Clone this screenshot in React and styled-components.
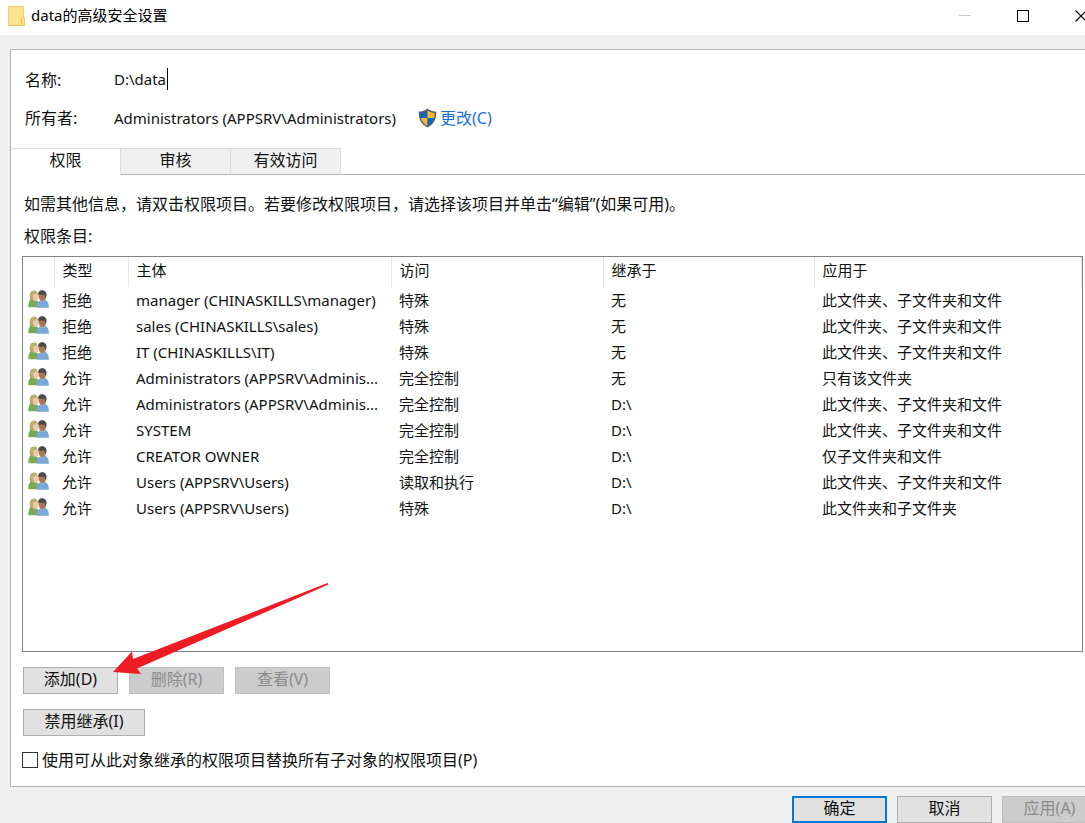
import React, { useState } from "react";
import styled, { createGlobalStyle, css } from "styled-components";

const entries = [
  ["拒绝", "manager (CHINASKILLS\\manager)", "特殊", "无", "此文件夹、子文件夹和文件"],
  ["拒绝", "sales (CHINASKILLS\\sales)", "特殊", "无", "此文件夹、子文件夹和文件"],
  ["拒绝", "IT (CHINASKILLS\\IT)", "特殊", "无", "此文件夹、子文件夹和文件"],
  ["允许", "Administrators (APPSRV\\Adminis...", "完全控制", "无", "只有该文件夹"],
  ["允许", "Administrators (APPSRV\\Adminis...", "完全控制", "D:\\", "此文件夹、子文件夹和文件"],
  ["允许", "SYSTEM", "完全控制", "D:\\", "此文件夹、子文件夹和文件"],
  ["允许", "CREATOR OWNER", "完全控制", "D:\\", "仅子文件夹和文件"],
  ["允许", "Users (APPSRV\\Users)", "读取和执行", "D:\\", "此文件夹、子文件夹和文件"],
  ["允许", "Users (APPSRV\\Users)", "特殊", "D:\\", "此文件夹和子文件夹"],
];

const tabs = ["权限", "审核", "有效访问"];

function FolderIcon() {
  return (
    <svg width="18" height="22" viewBox="0 0 18 22" aria-hidden="true">
      <path d="M.5 1.500h15v11h1v8H.5z" fill="#ffe391" stroke="#f0cf6b" />
      <path d="M13.500 20v-6.500l2-1" fill="none" stroke="#e8c253" />
      <path d="M.5 20.500h16" stroke="#e8c253" />
    </svg>
  );
}

function ShieldIcon() {
  return (
    <svg width="19" height="20" viewBox="0 0 19 20" aria-hidden="true">
      <path
        d="M9.500.5C7 2.800 4 3.500.8 3.600c-.2 7.400 1.800 12.400 8.700 16 6.900-3.600 8.900-8.600 8.700-16C15 3.500 12 2.800 9.500.5z"
        fill="#555f68"
      />
      <path d="M9.500 2.500C7.300 4.200 5 4.900 2.400 5c0 2 .1 3.400.5 5h6.600z" fill="#0f68c4" />
      <path d="M9.500 2.500c2.200 1.700 4.500 2.400 7.100 2.500 0 2-.1 3.400-.5 5H9.500z" fill="#fdb82b" />
      <path d="M9.500 10H2.900c1 3.400 2.900 6 6.600 8z" fill="#fdb82b" />
      <path d="M9.500 10h6.600c-1 3.400-2.900 6-6.600 8z" fill="#0f68c4" />
    </svg>
  );
}

function UsersIcon() {
  return (
    <svg width="21" height="18" viewBox="0 0 21 18" aria-hidden="true">
      <path d="M1.800 9c-.5-5 .5-8.500 4-8.500 3 0 4.200 2 4.200 5L8 11H3z" fill="#b9ad72" />
      <path d="M5 4.500c1.700 0 3.200-.7 4.500-1.500l1 3.500c0 2.500-1 4.500-2.800 4.500S4.800 8 5 4.500z" fill="#ecc9a6" />
      <path d="M.3 17.200c0-4 .6-7 3.200-8 1.500 2 3.500 2.300 5 1.300 2 1 2.500 3 2.500 6.700z" fill="#79ab55" />
      <path d="M10.500 5c0-3 1.500-4.500 3.500-4.500s4.200 1.500 4.200 5c0 3-1.500 6-3.700 6s-4-3-4-6.500z" fill="#a97855" />
      <path d="M10 4.500C10 1.800 12 .3 14.200.3s4.600 1.700 4.300 5c-.1 1.200-.5 2-1 2.700L16.500 4.500c-2 .3-4.500.2-6.500 0z" fill="#4b4a4b" />
      <path d="M9 17.800c0-2-.1-3-.5-4 1-1.500 2.300-2.800 4-3.300 1.500 1.300 3 1.200 4.700-.5 2.800 1 3.700 3.500 3.700 7.800z" fill="#7ba7d9" />
    </svg>
  );
}

export default function App() {
  const [active, setActive] = useState(0);
  const [replace, setReplace] = useState(false);

  return (
    <Window>
      <GlobalStyle />
      <TitleBar>
        <FolderIcon />
        <Title>data的高级安全设置</Title>
        <WindowButton aria-label="最小化" disabled>
          <svg width="12" height="12" viewBox="0 0 12 12">
            <path d="M0 5.500h12" stroke="#c8c8c8" />
          </svg>
        </WindowButton>
        <WindowButton aria-label="最大化">
          <svg width="12" height="12" viewBox="0 0 12 12">
            <rect x=".5" y=".5" width="11" height="11" fill="none" stroke="#000" />
          </svg>
        </WindowButton>
        <WindowButton aria-label="关闭">
          <svg width="12" height="12" viewBox="0 0 12 12">
            <path d="M.5.5l11 11M11.500.5l-11 11" stroke="#000" strokeWidth="1.200" />
          </svg>
        </WindowButton>
      </TitleBar>

      <Panel>
        <Properties>
          <label htmlFor="object-name">名称:</label>
          <NameInput id="object-name" value="D:\data" readOnly />
          <span>所有者:</span>
          <Owner>
            <span>Administrators (APPSRV\Administrators)</span>
            <ChangeLink href="#change">
              <ShieldIcon />
              更改(C)
            </ChangeLink>
          </Owner>
        </Properties>

        <TabList role="tablist">
          {tabs.map((tab, i) => (
            <Tab
              key={tab}
              role="tab"
              aria-selected={i === active}
              $active={i === active}
              onClick={() => setActive(i)}
            >
              {tab}
            </Tab>
          ))}
          <TabRest />
        </TabList>

        <Content>
          <Hint>如需其他信息，请双击权限项目。若要修改权限项目，请选择该项目并单击“编辑”(如果可用)。</Hint>
          <Hint id="entries-label">权限条目:</Hint>
          <ListBox>
            <Table aria-labelledby="entries-label">
              <colgroup>
                <Col $width={31} />
                <Col $width={74} />
                <Col $width={263} />
                <Col $width={212} />
                <Col $width={211} />
                <col />
              </colgroup>
              <thead>
                <tr>
                  <Th />
                  <Th>类型</Th>
                  <Th>主体</Th>
                  <Th>访问</Th>
                  <Th>继承于</Th>
                  <Th>应用于</Th>
                </tr>
              </thead>
              <tbody>
                {entries.map((entry, i) => (
                  <tr key={i}>
                    <IconCell>
                      <UsersIcon />
                    </IconCell>
                    {entry.map((value, j) => (
                      <Td key={j}>{value}</Td>
                    ))}
                  </tr>
                ))}
              </tbody>
            </Table>
          </ListBox>

          <ButtonRow>
            <Button>添加(D)</Button>
            <Button disabled>删除(R)</Button>
            <Button disabled>查看(V)</Button>
          </ButtonRow>
          <ButtonRow>
            <Button $wide>禁用继承(I)</Button>
          </ButtonRow>
          <CheckRow>
            <Checkbox
              type="checkbox"
              checked={replace}
              onChange={(e) => setReplace(e.target.checked)}
            />
            使用可从此对象继承的权限项目替换所有子对象的权限项目(P)
          </CheckRow>
          <Arrow viewBox="0 0 216 92" aria-hidden="true">
            <path d="M0 89L19 68.500 20 76 214.500 0 215.500 1.500 24 85.500 28 91z" fill="#ee1c25" />
          </Arrow>
        </Content>
      </Panel>

      <Footer>
        <Button $primary>确定</Button>
        <Button>取消</Button>
        <Button disabled>应用(A)</Button>
      </Footer>
    </Window>
  );
}

const GlobalStyle = createGlobalStyle`
  * {
    box-sizing: border-box;
  }
  body {
    margin: 0;
    background-color: #f0f0f0;
    color: #111;
    font-family: "Noto Sans", "Noto Sans CJK SC", sans-serif;
    font-size: 16px;
    line-height: 24px;
  }
  button, input {
    font: inherit;
    color: inherit;
  }
  svg {
    display: block;
    flex: none;
  }
`;

const Window = styled.main`
  display: flex;
  flex-direction: column;
  min-height: 100vh;
  overflow: hidden;
`;

const TitleBar = styled.header`
  display: flex;
  align-items: center;
  height: 35px;
  padding: 0 0 4px 8px;
  margin-right: -25px;
  background-color: white;
`;

const Title = styled.h1`
  flex: 1;
  margin: 0 0 0 5px;
  padding-bottom: 2px;
  color: black;
  font-size: 15px;
  font-weight: normal;
`;

const WindowButton = styled.button`
  display: grid;
  place-items: center;
  width: 58px;
  height: 31px;
  padding: 0;
  border: none;
  background-color: transparent;
`;

const Panel = styled.section`
  flex: 1;
  margin: 14px 0 0 10px;
  border: 1px solid #b4b4b4;
  border-right: none;
  background-color: white;
`;

const Properties = styled.div`
  display: grid;
  grid-template-columns: 89px 1fr;
  grid-auto-rows: 24px;
  row-gap: 14px;
  padding: 18px 14px;
`;

const NameInput = styled.input`
  field-sizing: content;
  justify-self: start;
  height: 22px;
  padding: 0 1px 0 0;
  border: none;
  border-right: 1px solid black;
  outline: none;
  font-size: 15px;
  caret-color: transparent;
`;

const Owner = styled.div`
  display: flex;
  align-items: center;
  gap: 22px;
  font-size: 15px;
`;

const ChangeLink = styled.a`
  display: flex;
  align-items: center;
  gap: 3px;
  color: #1a73d9;
  font-size: 16px;
  text-decoration: none;
`;

const TabList = styled.div`
  display: flex;
  height: 27px;
`;

const Tab = styled.button`
  width: 110px;
  padding: 0 0 3px;
  border: 1px solid #dcdcdc;
  border-left: none;
  border-bottom-color: #b4b4b4;
  background-color: #f0f0f0;
  line-height: 22px;
  ${(props) =>
    props.$active &&
    css`
      border-bottom-color: white;
      background-color: white;
    `}
`;

const TabRest = styled.div`
  flex: 1;
  border-bottom: 1px solid #b4b4b4;
`;

const Content = styled.div`
  position: relative;
  padding: 17px 2px 0 11px;
`;

const Hint = styled.p`
  margin: 0 0 8px 2px;
`;

const ListBox = styled.div`
  height: 396px;
  border: 1px solid #828282;
`;

const Table = styled.table`
  width: 100%;
  table-layout: fixed;
  border-collapse: collapse;
  font-size: 15px;
`;

const Col = styled.col`
  width: ${(props) => props.$width}px;
`;

const Th = styled.th`
  height: 30px;
  padding: 0 8px 4px;
  border-right: 1px solid #e5e5e5;
  font-weight: normal;
  text-align: left;
`;

const Td = styled.td`
  height: 26px;
  padding: 0 0 1px 8px;
  line-height: 20px;
  white-space: nowrap;
`;

const IconCell = styled.td`
  padding: 0 0 3px 5px;
`;

const ButtonRow = styled.div`
  display: flex;
  gap: 11px;
  margin: 15px 0 0 1px;
`;

const Button = styled.button`
  width: ${(props) => (props.$wide ? 122 : 95)}px;
  height: 27px;
  padding: 0 0 3px;
  border: ${(props) => (props.$primary ? "2px solid #0078d7" : "1px solid #adadad")};
  background-color: #e1e1e1;
  line-height: 20px;
  &:disabled {
    border-color: #bfbfbf;
    background-color: #ccc;
    color: #8b8b8b;
  }
`;

const CheckRow = styled.label`
  display: flex;
  align-items: center;
  gap: 4px;
  width: fit-content;
  margin-top: 12px;
`;

const Checkbox = styled.input`
  appearance: none;
  width: 16px;
  height: 16px;
  margin: 0;
  border: 1px solid #333;
  background-color: white;
  &:checked {
    box-shadow: inset 0 0 0 3px white;
    background-color: #333;
  }
`;

/* callout lying over the list and the button row */
const Arrow = styled.svg`
  position: absolute;
  left: 102px;
  top: 408px;
  width: 216px;
  height: 92px;
  pointer-events: none;
`;

const Footer = styled.footer`
  display: flex;
  justify-content: flex-end;
  gap: 10px;
  padding-top: 9px;
  margin-right: -12px;
`;
